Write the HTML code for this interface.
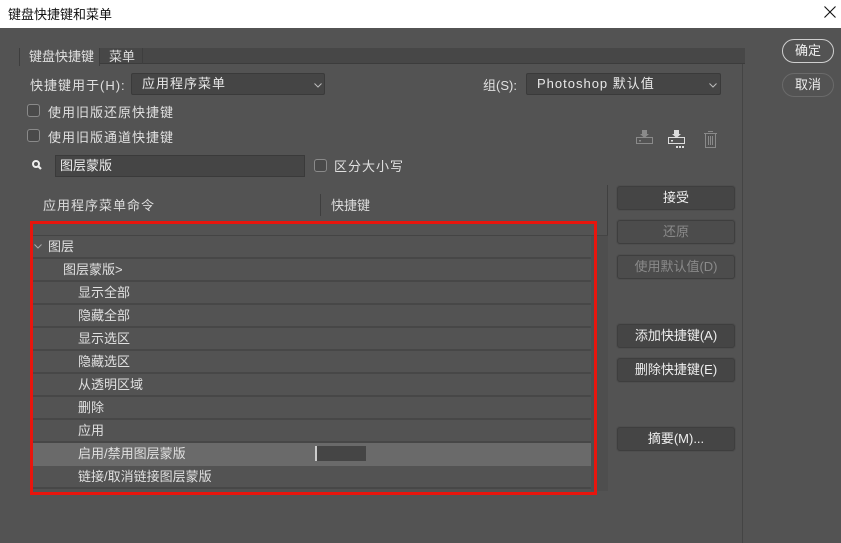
<!DOCTYPE html>
<html><head><meta charset="utf-8"><style>
*{margin:0;padding:0;box-sizing:border-box}
body{width:841px;height:543px;background:#535353;font-family:"Liberation Sans","Noto Sans CJK SC",sans-serif;font-size:13px;color:#e0e0e0;position:relative;overflow:hidden}
.a{position:absolute;white-space:nowrap}
.title{left:0;top:0;width:841px;height:28px;background:#fff;color:#111;font-size:13px;padding:4px 0 0 8px}
.sel{background:#454545;border:1px solid #3a3a3a;border-radius:2px;height:22px;padding:0 10px;line-height:20px;color:#e8e8e8;letter-spacing:1px}
.cb{width:13px;height:13px;border:1px solid #8a8a8a;border-radius:3px;background:#4a4a4a}
.btn{left:617px;width:118px;height:24px;background:#454545;border:1px solid #3e3e3e;border-radius:3px;box-shadow:0 0 0 1px #4e4e4e;text-align:center;line-height:22px;color:#eee}
.dis{color:#8a8a8a;background:#4c4c4c}
.pill{left:782px;width:52px;height:24px;border:1.5px solid #cfcfcf;border-radius:12px;text-align:center;line-height:21px;color:#eee}
.row{left:33px;width:558px;height:23px;border-bottom:2px solid #474747;line-height:21px}
</style></head><body>
<div class="a title">键盘快捷键和菜单</div>
<svg class="a" style="left:824px;top:6px" width="12" height="12"><path d="M0.5 0.5l11 11M11.5 0.5l-11 11" stroke="#111" stroke-width="1.1"/></svg>

<div class="a" style="left:19px;top:48px;width:726px;height:16px;background:#474747;border-bottom:1px solid #3c3c3c"></div>
<div class="a" style="left:19px;top:48px;width:81px;height:18px;background:#535353;border-left:1px solid #3e3e3e;border-right:1px solid #3e3e3e;padding:1px 0 0 9px;line-height:16px">键盘快捷键</div>
<div class="a" style="left:109px;top:49px;color:#ddd;line-height:16px">菜单</div>
<div class="a" style="left:142px;top:48px;width:1px;height:16px;background:#3e3e3e"></div>
<div class="a" style="left:742px;top:64px;width:1px;height:479px;background:#444"></div>

<div class="a" style="left:30px;top:75px;letter-spacing:1px">快捷键用于(H):</div>
<div class="a sel" style="left:131px;top:73px;width:194px">应用程序菜单</div>
<svg class="a" style="left:314px;top:83px" width="8" height="5"><path d="M0.5 0.5l3.5 3.5 3.5-3.5" fill="none" stroke="#bbb"/></svg>
<div class="a" style="left:483px;top:75px">组(S):</div>
<div class="a sel" style="left:526px;top:73px;width:195px">Photoshop 默认值</div>
<svg class="a" style="left:709px;top:83px" width="8" height="5"><path d="M0.5 0.5l3.5 3.5 3.5-3.5" fill="none" stroke="#bbb"/></svg>

<div class="a cb" style="left:27px;top:104px"></div><div class="a" style="left:48px;top:102px;letter-spacing:1px">使用旧版还原快捷键</div>
<div class="a cb" style="left:27px;top:129px"></div><div class="a" style="left:48px;top:127px;letter-spacing:1px">使用旧版通道快捷键</div>

<svg class="a" style="left:632px;top:129px" width="90" height="20">
<g fill="none" stroke="#8a8a8a" stroke-width="1"><rect x="4.5" y="8.5" width="16" height="6"/><rect x="36.5" y="8.5" width="16" height="6" stroke="#ddd"/><path d="M73.5 4.5h10v14h-10zM72 4.5h13M76 2.5h5M76.5 7v9M78.5 7v9M80.5 7v9"/></g>
<path d="M10 1h5v4h2l-4.5 4-4.5-4h2z" fill="#8a8a8a"/><path d="M42 1h5v4h2l-4.5 4-4.5-4h2z" fill="#ddd"/>
<rect x="7" y="11" width="2" height="1.5" fill="#8a8a8a"/><rect x="39" y="11" width="2" height="1.5" fill="#ddd"/>
<path d="M44 17h2v2h-2zM47 17h2v2h-2zM50 17h2v2h-2z" fill="#ddd"/>
</svg>

<svg class="a" style="left:31px;top:159px" width="12" height="12"><circle cx="5" cy="5" r="3" fill="none" stroke="#eee" stroke-width="2"/><path d="M7 7l3 3" stroke="#eee" stroke-width="2.2"/></svg>
<div class="a" style="left:55px;top:155px;width:250px;height:22px;background:#454545;border:1px solid #3a3a3a;padding:0 4px;line-height:20px;color:#eee">图层蒙版</div>
<div class="a cb" style="left:314px;top:159px"></div><div class="a" style="left:334px;top:156px;letter-spacing:1px">区分大小写</div>

<div class="a" style="left:43px;top:195px;color:#ddd;letter-spacing:1px">应用程序菜单命令</div>
<div class="a" style="left:320px;top:194px;width:1px;height:22px;background:#3e3e3e"></div>
<div class="a" style="left:331px;top:195px;color:#ddd">快捷键</div>
<div class="a" style="left:607px;top:185px;width:1px;height:305px;background:#404040"></div>
<div class="a" style="left:33px;top:235px;width:575px;height:1px;background:#444"></div>
<div class="a" style="left:591px;top:236px;width:17px;height:255px;background:#4e4e4e"></div>

<div class="a row" style="top:236px;padding-left:15px">图层</div>
<svg class="a" style="left:34px;top:244px" width="8" height="5"><path d="M0.5 0.5l3.5 3.5 3.5-3.5" fill="none" stroke="#aaa"/></svg>
<div class="a row" style="top:236px;padding-left:15px;border:none;padding-left:15px"><span style="visibility:hidden">.</span></div>
<div class="a row" style="top:259px;padding-left:30px">图层蒙版&gt;</div>
<div class="a row" style="top:282px;padding-left:45px">显示全部</div>
<div class="a row" style="top:305px;padding-left:45px">隐藏全部</div>
<div class="a row" style="top:328px;padding-left:45px">显示选区</div>
<div class="a row" style="top:351px;padding-left:45px">隐藏选区</div>
<div class="a row" style="top:374px;padding-left:45px">从透明区域</div>
<div class="a row" style="top:397px;padding-left:45px">删除</div>
<div class="a row" style="top:420px;padding-left:45px">应用</div>
<div class="a row" style="top:443px;padding-left:45px;background:#6a6a6a;border-bottom-color:#6a6a6a">启用/禁用图层蒙版</div>
<div class="a" style="left:315px;top:446px;width:51px;height:15px;background:#454545;border-left:2px solid #ccc"></div>
<div class="a row" style="top:466px;padding-left:45px">链接/取消链接图层蒙版</div>

<div class="a" style="left:30px;top:221px;width:567px;height:274px;border:3px solid #e8150d"></div>

<div class="a btn" style="top:186px">接受</div>
<div class="a btn dis" style="top:220px">还原</div>
<div class="a btn dis" style="top:255px">使用默认值(D)</div>
<div class="a btn" style="top:324px">添加快捷键(A)</div>
<div class="a btn" style="top:358px">删除快捷键(E)</div>
<div class="a btn" style="top:427px">摘要(M)...</div>

<div class="a pill" style="top:39px">确定</div>
<div class="a pill" style="top:73px;border-color:#6a6a6a">取消</div>
</body></html>
